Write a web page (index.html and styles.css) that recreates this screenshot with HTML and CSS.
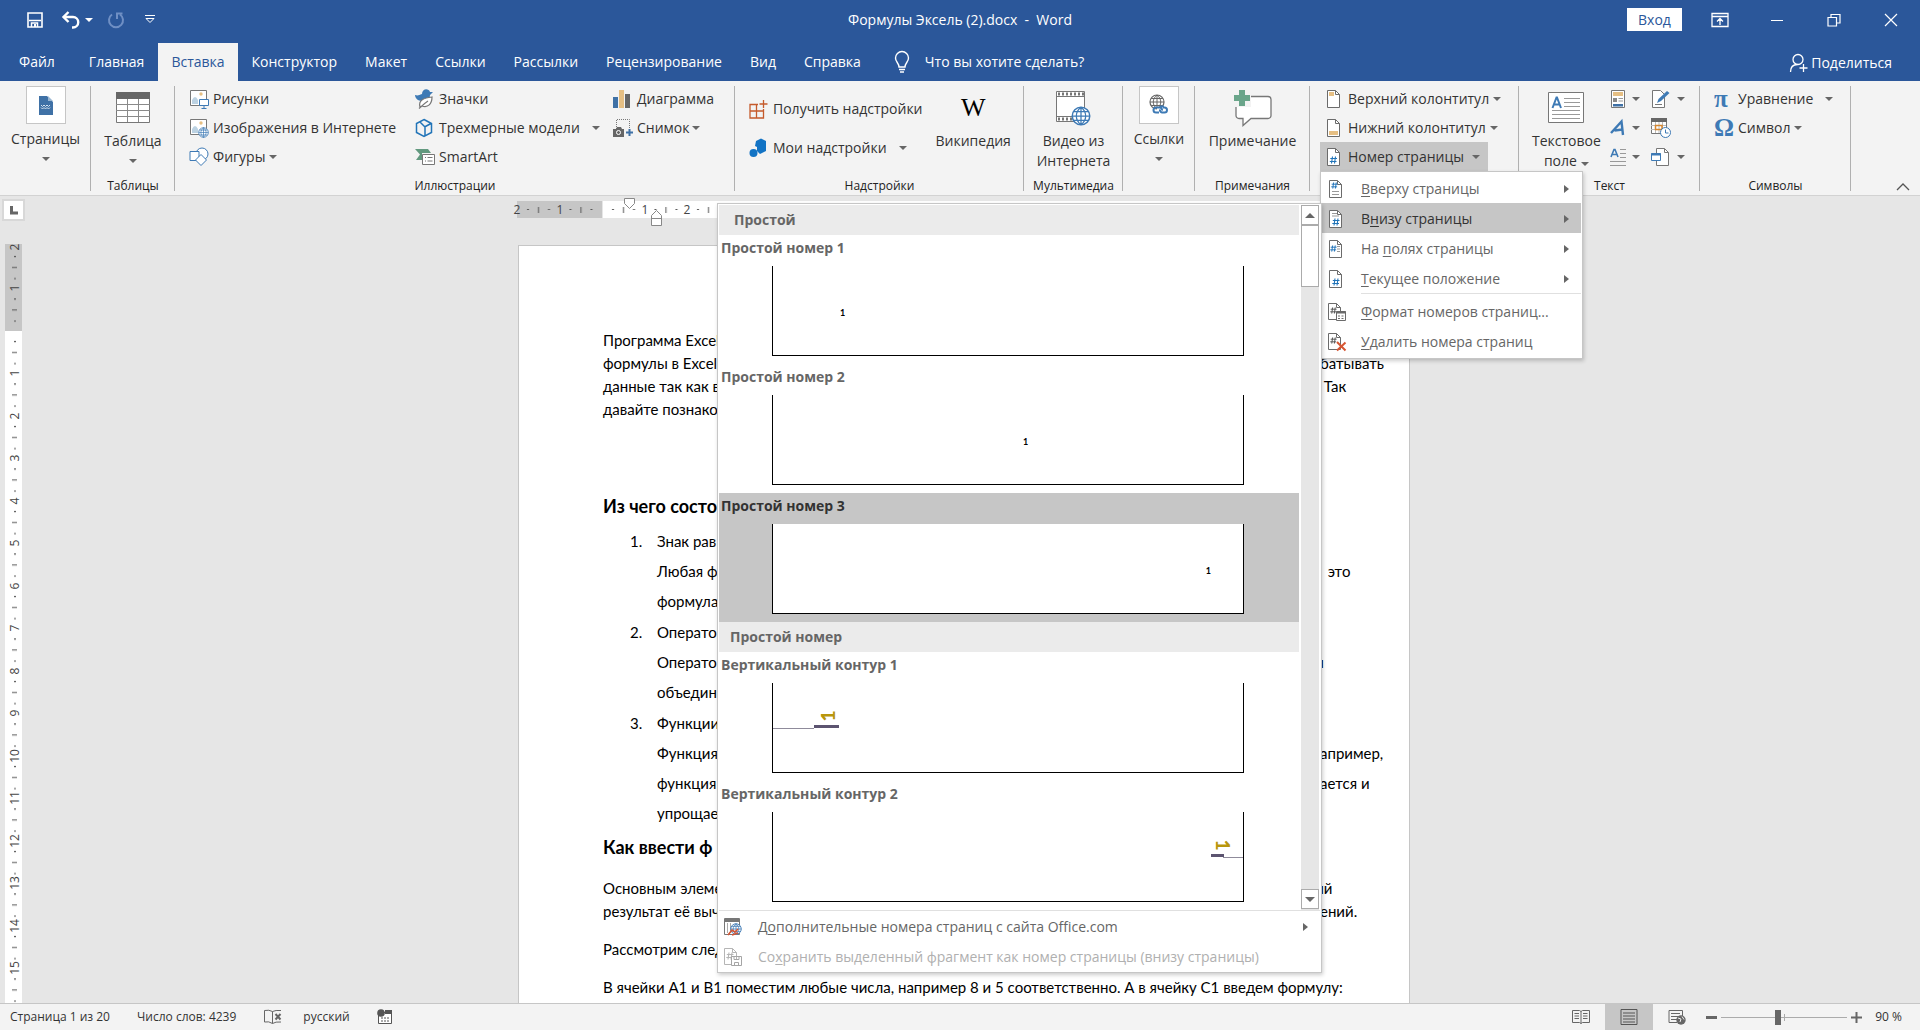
FILE: index.html
```html
<!DOCTYPE html>
<html lang="ru">
<head>
<meta charset="utf-8">
<meta name="viewport" content="width=device-width, initial-scale=1">
<title>Формулы Эксель (2).docx - Word</title>
<link rel="stylesheet" href="styles.css">
</head>
<body>
<svg class="defs" aria-hidden="true">
  <symbol id="doc" viewBox="0 0 20 20"><path d="M3.5 1.5h8l4 4v13h-12z" fill="#fff" stroke="#6b6b6b"/><path d="M11.5 1.5v4h4" fill="none" stroke="#6b6b6b"/></symbol>
  <symbol id="hash" viewBox="0 0 8 8"><path d="M3 .5 2 7.500M6 .5 5 7.500M.8 2.500h6.700M.3 5.500h6.700" fill="none" stroke="currentColor" stroke-width="1.100"/></symbol>
  <symbol id="globe" viewBox="0 0 16 16"><circle cx="8" cy="8" r="7" fill="#fff" stroke="currentColor" stroke-width="1.200"/><path d="M8 1v14M1 8h14M2.200 4.500h11.600M2.200 11.500h11.600M8 1c-5 4-5 10 0 14M8 1c5 4 5 10 0 14" fill="none" stroke="currentColor"/></symbol>
  <symbol id="picture" viewBox="0 0 20 20"><path d="M1.500 1.500h16v15h-16z" fill="#fff" stroke="#777"/><circle cx="12" cy="5" r="1.700" fill="#e6bf83"/><path d="M3 15V11q3-6 6 0v4z" fill="#bcd2e2"/></symbol>
</svg>

<header class="title-bar">
  <div class="quick">
    <button class="quick-btn" aria-label="Сохранить"><svg width="18" height="18" viewBox="0 0 18 18"><path d="M2 2h14v14H2z" fill="none" stroke="#fff" stroke-width="1.600"/><path d="M3 9.500h12M5.500 16v-4h6v4" fill="none" stroke="#fff" stroke-width="1.500"/><path d="M8 13h2v3H8z" fill="#fff"/></svg></button>
    <button class="quick-btn undo" aria-label="Отменить"><svg width="20" height="18" viewBox="0 0 20 18"><path d="M3 6h9a5 5 0 0 1 0 10.500h-1" fill="none" stroke="#fff" stroke-width="2.400"/><path d="M7.500 1 2.500 6l5 5" fill="none" stroke="#fff" stroke-width="2.400"/></svg><i class="caret light"></i></button>
    <button class="quick-btn redo" aria-label="Повторить"><svg width="18" height="18" viewBox="0 0 18 18"><path d="M13 3.500A7 7 0 1 1 5 3.500M10 8V2.500h5.500" fill="none" stroke="#6f8fc4" stroke-width="2"/></svg></button>
    <button class="quick-btn" aria-label="Настройка панели"><svg width="12" height="9" viewBox="0 0 12 9"><path d="M1 .5h10M2 3.500h8L6 7.500z" fill="none" stroke="#fff"/></svg></button>
  </div>
  <h1 class="doc-name">Формулы Эксель (2).docx&nbsp; -&nbsp; Word</h1>
  <div class="window-controls">
    <button class="sign-in">Вход</button>
    <button class="win-btn" aria-label="Параметры ленты"><svg width="18" height="16" viewBox="0 0 18 16"><path d="M1 1.500h16v13H1zM1 4.500h16M9 13V7M6 9.500l3-3 3 3" fill="none" stroke="#fff" stroke-width="1.300"/></svg></button>
    <button class="win-btn" aria-label="Свернуть"><svg width="14" height="14" viewBox="0 0 14 14"><path d="M1 7.500h12" stroke="#fff"/></svg></button>
    <button class="win-btn" aria-label="Свернуть в окно"><svg width="14" height="14" viewBox="0 0 14 14"><path d="M1 4.500h8.500V13H1zM4 4.500v-3h9V10H9.500" fill="none" stroke="#fff" stroke-width="1.200"/></svg></button>
    <button class="win-btn" aria-label="Закрыть"><svg width="14" height="14" viewBox="0 0 14 14"><path d="m1 1 12 12M13 1 1 13" stroke="#fff" stroke-width="1.200"/></svg></button>
  </div>
</header>

<nav class="tabs">
  <button class="tab file">Файл</button>
  <button class="tab">Главная</button>
  <button class="tab active">Вставка</button>
  <button class="tab">Конструктор</button>
  <button class="tab">Макет</button>
  <button class="tab">Ссылки</button>
  <button class="tab">Рассылки</button>
  <button class="tab">Рецензирование</button>
  <button class="tab">Вид</button>
  <button class="tab">Справка</button>
  <button class="tell-me"><svg width="16" height="22" viewBox="0 0 16 22"><path d="M5 16c0-4-3.500-5-3.500-9a6.500 6.500 0 0 1 13 0c0 4-3.500 5-3.500 9zM5 18.500h6M6 21h4" fill="none" stroke="#fff" stroke-width="1.400"/></svg>Что вы хотите сделать?</button>
  <button class="share"><svg width="20" height="20" viewBox="0 0 20 20"><circle cx="9" cy="6.500" r="5" fill="none" stroke="#fff" stroke-width="1.300"/><path d="M1.500 19c0-5 3-7.500 7-7.500M14.500 11v8M10.500 15h8" fill="none" stroke="#fff" stroke-width="1.300"/></svg>Поделиться</button>
</nav>

<div class="ribbon">
  <section class="group g-pages">
    <div class="group-body center">
      <button class="big framed"><span class="frame"><svg width="14" height="20" viewBox="0 0 14 20"><path d="M0 1h8l6 6v13H0z" fill="#3f71a6"/><path d="M9 1v5h5z" fill="#9bb8d3"/><path d="m2 10 1.500 1.500L5 10l1.500 1.500L8 10l1.500 1.500L11 10M2 12.500 3.500 14 5 12.500 6.500 14 8 12.500 9.500 14l1.500-1.500" fill="none" stroke="#d6e3ef"/></svg></span>Страницы<i class="caret"></i></button>
    </div>
  </section>
  <section class="group g-tables">
    <div class="group-body center">
      <button class="big"><span class="pic"><svg width="36" height="33" viewBox="0 0 36 33"><path d="M1.500 1.500h33v30h-33z" fill="#fff" stroke="#777"/><path d="M1 1h34v7H1z" fill="#666"/><path d="M12.500 8v23M23.500 8v23M1 13.500h34M1 19.500h34M1 25.500h34" stroke="#8a8a8a"/></svg></span>Таблица<i class="caret"></i></button>
    </div>
    <h2 class="group-name">Таблицы</h2>
  </section>
  <section class="group g-art">
    <div class="group-body art-cols">
      <div class="stack">
        <button class="cmd"><svg width="20" height="20"><use href="#picture"/><path d="M10.500 10.500h9v6h-9zM15 17v2M12.500 19.500h5" fill="#fff" stroke="#3e7ab5"/></svg>Рисунки</button>
        <button class="cmd"><svg width="20" height="20"><use href="#picture"/><use href="#globe" x="9" y="9" width="11" height="11" color="#3e7ab5"/></svg>Изображения в Интернете</button>
        <button class="cmd"><svg width="20" height="20" fill="#fff" stroke="#3e7ab5"><circle cx="13" cy="7" r="6"/><path d="M1 4.500h9v9H1z"/><path d="m12 7.500 5.500 5.500-5.500 5.500L6.500 13z"/></svg>Фигуры<i class="caret"></i></button>
      </div>
      <div class="stack">
        <button class="cmd"><svg width="20" height="20"><path d="M0 6c3 1 4 0 7-1 0-6 7-6 8-2l3 0-3 3c0 6-5 6-8 6C3 12 0 9 0 6z" fill="#3e7ab5"/><path d="M5 18C3 11 9 9 17 8c0 7-4 11-10 9zM4 19.500C8 16 10 14 13 12" fill="#fff" stroke="#777" stroke-width="1.200"/></svg>Значки</button>
        <button class="cmd"><svg width="20" height="20" fill="none" stroke="#2174b8" stroke-width="1.500"><path d="m9 1.500 7.500 4v9L9 18.500l-7.500-4v-9zM5 4l5 5v9.500M16 5.500 9.500 9"/></svg>Трехмерные модели<i class="caret wide"></i></button>
        <button class="cmd"><svg width="20" height="20"><path d="M0 2h13l3 4H7v7H1l4-5.500z" fill="#62997f"/><path d="M7.500 7.500h12v10h-12z" fill="#fff" stroke="#777"/><path d="M10 10.500h1M12.500 10.500h5M10 14h1M12.500 14h5" stroke="#777"/></svg>SmartArt</button>
      </div>
      <div class="stack">
        <button class="cmd"><svg width="20" height="20"><path d="M0 8h5v11H0z" fill="#3f71a6"/><path d="M6 1h5v18H6z" fill="#e6bf83"/><path d="M12 5h5v14h-5z" fill="#666"/></svg>Диаграмма</button>
        <button class="cmd"><svg width="20" height="20"><path d="M3.500 11V1.500h13V11" fill="none" stroke="#777" stroke-dasharray="1 1"/><path d="M0 11h3l1-2h4l1 2h2v8H0z" fill="#666"/><circle cx="5.500" cy="14.500" r="2" fill="#666" stroke="#fff"/><path d="M16.500 11v7M13 14.500h7" stroke="#3f71a6" stroke-width="2"/></svg>Снимок<i class="caret tight"></i></button>
      </div>
    </div>
    <h2 class="group-name">Иллюстрации</h2>
  </section>
  <section class="group g-addins">
    <div class="group-body addins">
      <div class="stack roomy">
        <button class="cmd"><svg width="20" height="20" fill="none" stroke="#c55a2b" stroke-width="1.300"><path d="M1 5.500h6.500V19H1zM1 12h13.500v7H1M14.500 12v-2M7.500 12H14M7.500 5.500H9M14.500 1v8M10.500 5h8"/></svg>Получить надстройки</button>
        <button class="cmd"><svg width="20" height="20" fill="#1273c4"><path d="m7 3 5-2.500L17 3v10l-6 3-3-3V9L6 8z"/><circle cx="4.500" cy="15" r="4"/></svg>Мои надстройки<i class="caret wide"></i></button>
      </div>
      <button class="big"><span class="pic wiki">W</span>Википедия</button>
    </div>
    <h2 class="group-name">Надстройки</h2>
  </section>
  <section class="group g-media">
    <div class="group-body center">
      <button class="big"><span class="pic"><svg width="36" height="36" viewBox="0 0 36 36"><path d="M1.500 1.500h28v30h-28z" fill="#fff" stroke="#777"/><path d="M1 6.500h29M1 26.500h29" stroke="#777"/><path d="M3 4h26M3 29h26" stroke="#777" stroke-width="3" stroke-dasharray="2 2"/><use href="#globe" x="16" y="16" width="20" height="20" color="#3e7ab5"/></svg></span>Видео из<br>Интернета</button>
    </div>
    <h2 class="group-name">Мультимедиа</h2>
  </section>
  <section class="group g-links">
    <div class="group-body center">
      <button class="big framed"><span class="frame"><svg width="22" height="22" viewBox="0 0 22 22"><use href="#globe" x="1" y="0" width="16" height="16" color="#666"/><path d="M9 13h7v6H9z" fill="#fff"/><path d="M11 18.500H8a2.500 2.500 0 0 1 0-5h4a2.500 2.500 0 0 1 2 3M12 12.500h4M15 13.500h1.500a2.500 2.500 0 0 1 0 5H14a2.500 2.500 0 0 1-2-3" fill="none" stroke="#3e7ab5" stroke-width="2"/></svg></span>Ссылки<i class="caret"></i></button>
    </div>
  </section>
  <section class="group g-notes">
    <div class="group-body center">
      <button class="big"><span class="pic"><svg width="40" height="38" viewBox="0 0 40 38"><path d="M6 7.500h29a3 3 0 0 1 3 3v16a3 3 0 0 1-3 3H18l-8 7v-7H6a3 3 0 0 1-3-3v-16z" fill="#fff" stroke="#777" stroke-width="1.300"/><path d="M0 0h18v18H0z" fill="#f3f3f3"/><path d="M9 1v16M1 9h16" stroke="#6aa58a" stroke-width="6"/></svg></span>Примечание</button>
    </div>
    <h2 class="group-name">Примечания</h2>
  </section>
  <section class="group g-header">
    <div class="group-body">
      <div class="stack headers">
        <button class="cmd"><svg width="20" height="20"><use href="#doc"/><path d="M5 3h5v4H5z" fill="#e6bf83"/></svg>Верхний колонтитул<i class="caret"></i></button>
        <button class="cmd"><svg width="20" height="20"><use href="#doc"/><path d="M5 13h9v4H5z" fill="#e6bf83"/></svg>Нижний колонтитул<i class="caret"></i></button>
        <div class="menu-anchor">
          <button class="cmd open" aria-expanded="true"><svg width="20" height="20"><use href="#doc"/><use href="#hash" x="5" y="9" width="9" height="8" color="#2174b8"/></svg>Номер страницы<i class="caret"></i></button>
          <ul class="menu">
            <li><button class="item"><svg width="20" height="20"><use href="#doc"/><use href="#hash" x="5" y="3" width="7" height="7" color="#2174b8"/><path d="M6 12.500h7M6 15.500h7" stroke="#999"/></svg><span><u>В</u>верху страницы</span><i class="arrow"></i></button></li>
            <li class="has-sub">
              <button class="item current"><svg width="20" height="20"><use href="#doc"/><path d="M6 4.500h5M6 7h7" stroke="#999"/><use href="#hash" x="6" y="9" width="8" height="8" color="#2174b8"/></svg><span>В<u>н</u>изу страницы</span><i class="arrow"></i></button>
              <div class="gallery">
                <div class="gallery-scroll">
                  <div class="gallery-list">
                    <h3 class="gallery-head">Простой</h3>
                    <button class="choice"><span class="choice-name">Простой номер 1</span><span class="preview">1</span></button>
                    <button class="choice"><span class="choice-name">Простой номер 2</span><span class="preview mid">1</span></button>
                    <button class="choice hover"><span class="choice-name">Простой номер 3</span><span class="preview end">1</span></button>
                    <h3 class="gallery-head compact">Простой номер</h3>
                    <button class="choice"><span class="choice-name">Вертикальный контур 1</span><span class="preview art"><svg width="470" height="90" viewBox="0 0 470 90"><path d="M0 45.500h41" stroke="#8f8b9b"/><path d="M41 43.500h25" stroke="#5c5470" stroke-width="3"/><text class="side-number" transform="translate(62 33) rotate(-90)">1</text></svg></span></button>
                    <button class="choice"><span class="choice-name">Вертикальный контур 2</span><span class="preview art"><svg width="470" height="90" viewBox="0 0 470 90"><path d="M450 45.500h20" stroke="#8f8b9b"/><path d="M438 43.500h13" stroke="#5c5470" stroke-width="3"/><text class="side-number" transform="translate(443 33) rotate(90)">1</text></svg></span></button>
                  </div>
                  <div class="scrollbar">
                    <button class="scroll-btn" aria-label="Вверх"><i class="tri up"></i></button>
                    <div class="thumb"></div>
                    <button class="scroll-btn last" aria-label="Вниз"><i class="tri down"></i></button>
                  </div>
                </div>
                <div class="gallery-foot">
                  <button class="item"><svg width="20" height="20"><path d="M1.500 1.500h15v16h-15z" fill="#fff" stroke="#777"/><path d="M1 2h16v3H1z" fill="#777"/><path d="M4.500 6v10M7.500 6v10" stroke="#aaa"/><use href="#globe" x="7" y="6" width="12" height="12" color="#3e7ab5"/><path d="m5 18 4-5 3 2 3-3M9 18l6-2" fill="none" stroke="#d65532" stroke-width="1.600"/></svg><span>Д<u>о</u>полнительные номера страниц с сайта Office.com</span><i class="arrow"></i></button>
                  <button class="item" disabled><svg width="20" height="20" fill="#fff" stroke="#b5b5b5"><path d="M1.500 1.500h8l4 4v12h-12zM9.500 1.500v4h4"/><use href="#hash" x="3" y="5" width="8" height="8" color="#b5b5b5"/><path d="M8.500 9.500h10v9h-10zM11 9.500v3h5v-3M11.500 18.500v-3h4v3" stroke="#a5a5a5"/></svg><span>Со<u>х</u>ранить выделенный фрагмент как номер страницы (внизу страницы)</span></button>
                </div>
              </div>
            </li>
            <li><button class="item"><svg width="20" height="20"><use href="#doc"/><use href="#hash" x="4" y="6" width="7" height="7" color="#2174b8"/><path d="M11 7.500h3M11 10h3M11 12.500h3" stroke="#999"/></svg><span>На <u>п</u>олях страницы</span><i class="arrow"></i></button></li>
            <li><button class="item"><svg width="20" height="20"><use href="#doc"/><use href="#hash" x="6" y="9" width="8" height="8" color="#2174b8"/></svg><span><u>Т</u>екущее положение</span><i class="arrow"></i></button></li>
            <li class="rule"><button class="item"><svg width="20" height="20"><path d="M2.500 1.500h8l4 4v12h-12zM10.500 1.500v4h4" fill="#fff" stroke="#6b6b6b"/><use href="#hash" x="4" y="5" width="7" height="7" color="#555"/><path d="M10.500 9.500h9v9h-9z" fill="#fff" stroke="#6b6b6b"/><path d="M10 10.500h10" stroke="#6b6b6b" stroke-width="2"/><path d="M12 14h2M15.500 14h2M12 16.500h2M15.500 16.500h2" stroke="#6b6b6b"/></svg><span><u>Ф</u>ормат номеров страниц...</span></button></li>
            <li><button class="item"><svg width="20" height="20"><path d="M2.500 1.500h8l4 4v12h-12zM10.500 1.500v4h4" fill="#fff" stroke="#6b6b6b"/><use href="#hash" x="4" y="5" width="7" height="7" color="#555"/><path d="m11 10 8.500 8.500M19.500 10.500 11 18.500" stroke="#d65532" stroke-width="2"/></svg><span><u>У</u>далить номера страниц</span></button></li>
          </ul>
        </div>
      </div>
    </div>
  </section>
  <section class="group g-text">
    <div class="group-body text-tools">
      <button class="big"><span class="pic"><svg width="36" height="33" viewBox="0 0 36 33"><path d="M.5 1.500h35v30H.5z" fill="#fff" stroke="#777"/><path d="M16 7.500h16M16 11.500h16M16 15.500h16M4 19.500h28M4 23.500h28M4 27.500h28" stroke="#999"/><path d="m4.500 17 4-10.500h.5l4 10.500M6 13.500h5.500" fill="none" stroke="#3e7ab5" stroke-width="2"/></svg></span>Текстовое<br><span>поле<i class="caret"></i></span></button>
      <div class="stack icons">
        <button class="cmd" aria-label="Экспресс-блоки"><svg width="16" height="20"><path d="M1.500 1.500h13v17h-13z" fill="#fff" stroke="#777"/><path d="M3 3h10v4H3z" fill="#e6bf83"/><path d="M3 9h4v4H3z" fill="#888"/><path d="M8.500 9.500h4.500M8.500 12h4.500" stroke="#999"/><path d="M3 15h10v2.500H3z" fill="#3f71a6"/></svg><i class="caret"></i></button>
        <button class="cmd" aria-label="Объект WordArt"><svg width="16" height="20" fill="none" stroke="#3e7ab5" stroke-width="2.400"><path d="M1 15 11.500 3.500 13 17M4.500 12.500l8-1"/></svg><i class="caret"></i></button>
        <button class="cmd" aria-label="Буквица"><svg width="16" height="20"><path d="m1 10 3-7.500h1L8 10M2.500 7.500h4" fill="none" stroke="#3e7ab5" stroke-width="1.600"/><path d="M10 2.500h6M10 6.500h6M10 10.500h6M0 14.500h16M0 18.500h16" stroke="#999"/></svg><i class="caret"></i></button>
      </div>
      <div class="stack icons">
        <button class="cmd" aria-label="Строка подписи"><svg width="20" height="20"><path d="M1.500 1.500h8l4 4v13h-12z" fill="#fff" stroke="#777"/><path d="M4 15.500h7" stroke="#777"/><path d="m6 14 1.500-4L16 2l2.500 2L10 12z" fill="#3e7ab5"/></svg><i class="caret"></i></button>
        <button class="cmd" aria-label="Дата и время"><svg width="20" height="20"><path d="M.5 1.500h15v14H.5z" fill="#fff" stroke="#777"/><path d="M0 0h16v4H0z" fill="#666"/><path d="M4.500 4v11M8 4v11M11.500 4v11M0 7.500h15M0 11.500h15" stroke="#bbb"/><path d="M4.500 7.500H11v4H4.500z" fill="none" stroke="#d6862f" stroke-width="1.500"/><circle cx="14.500" cy="14.500" r="5" fill="#fff" stroke="#3e7ab5"/><path d="M14.500 11.500v3.500h3" fill="none" stroke="#3e7ab5"/></svg></button>
        <button class="cmd" aria-label="Объект"><svg width="20" height="20"><path d="M5.500 1.500h8l4 4v13h-12z" fill="#fff" stroke="#777"/><path d="M13.500 1.500v4h4" fill="none" stroke="#777"/><path d="M.5 6.500h9v7h-9z" fill="#fff" stroke="#3e7ab5"/><path d="M0 7.500h10" stroke="#3e7ab5" stroke-width="2"/></svg><i class="caret"></i></button>
      </div>
    </div>
    <h2 class="group-name">Текст</h2>
  </section>
  <section class="group g-symbols">
    <div class="group-body">
      <div class="stack symbols">
        <button class="cmd"><b class="glyph">π</b>Уравнение<i class="caret wide"></i></button>
        <button class="cmd"><b class="glyph">Ω</b>Символ<i class="caret"></i></button>
      </div>
    </div>
    <h2 class="group-name">Символы</h2>
  </section>
  <button class="collapse" aria-label="Свернуть ленту"><svg width="14" height="8" viewBox="0 0 14 8"><path d="m1 7 6-6 6 6" fill="none" stroke="#555" stroke-width="1.300"/></svg></button>
</div>

<main class="workspace">
  <div class="corner"><button class="tab-stop" aria-label="Табуляция"><svg width="8" height="9" viewBox="0 0 8 9"><path d="M1.500 0v7H8" fill="none" stroke="#666" stroke-width="3"/></svg></button></div>
  <div class="ruler-h">
    <svg width="890" height="30" viewBox="0 0 890 30">
      <defs><pattern id="ticks-h" patternUnits="userSpaceOnUse" x="83" y="5" width="42.500" height="17"><path d="M10 8h2v1h-2zM21 6h1v6h-1zM31 8h2v1h-2z" fill="#555"/></pattern></defs>
      <path d="M-2 5h85v17h-85z" fill="#c6c6c6"/><path d="M84 5h784v17H84z" fill="#fff"/><path d="M868 5h22v17h-22z" fill="#c6c6c6"/>
      <path d="M0 5h890v17H0z" fill="url(#ticks-h)"/>
      <g class="ruler-num"><text x="-2" y="18">2</text><text x="41" y="18">1</text><text x="126" y="18">1</text><text x="168" y="18">2</text></g>
      <path d="M105.500 2.500h10v5l-5 5-5-5z" fill="#fff" stroke="#888"/><path d="M132.500 29.500v-10l5-5 5 5v10zM132.500 22.500h10" fill="#fff" stroke="#888"/>
    </svg>
  </div>
  <div class="ruler-v">
    <svg width="17" height="1000" viewBox="0 0 17 1000">
      <defs><pattern id="ticks-v" patternUnits="userSpaceOnUse" x="0" y="87" width="17" height="42.500"><path d="M9 10h2v1h-2zM7 21h5v1h-5zM9 32h2v1h-2z" fill="#555"/></pattern></defs>
      <path d="M0 0h17v87H0z" fill="#c6c6c6"/><path d="M0 87h17v913H0z" fill="#fff"/><path d="M0 0h17v1000H0z" fill="url(#ticks-v)"/>
      <g class="ruler-num">
        <text transform="translate(14 3) rotate(-90)">2</text><text transform="translate(14 44) rotate(-90)">1</text>
        <text transform="translate(14 129) rotate(-90)">1</text><text transform="translate(14 172) rotate(-90)">2</text><text transform="translate(14 214) rotate(-90)">3</text><text transform="translate(14 257) rotate(-90)">4</text><text transform="translate(14 299) rotate(-90)">5</text><text transform="translate(14 342) rotate(-90)">6</text><text transform="translate(14 384) rotate(-90)">7</text><text transform="translate(14 427) rotate(-90)">8</text><text transform="translate(14 469) rotate(-90)">9</text><text transform="translate(14 512) rotate(-90)">10</text><text transform="translate(14 554) rotate(-90)">11</text><text transform="translate(14 597) rotate(-90)">12</text><text transform="translate(14 639) rotate(-90)">13</text><text transform="translate(14 682) rotate(-90)">14</text><text transform="translate(14 724) rotate(-90)">15</text>
      </g>
    </svg>
  </div>
  <article class="page">
    <p class="first"><span class="line"><span>Программа Excel</span></span>
      <span class="line"><span>формулы в Excel</span><span>батывать</span></span>
      <span class="line"><span>данные так как в</span><span>&nbsp;Так</span></span>
      <span class="line"><span>давайте познако</span></span></p>
    <h2 class="chapter">Из чего состо</h2>
    <ol class="steps">
      <li><span class="num">1.</span><div><span class="line"><span>Знак рав</span></span><span class="line"><span>Любая ф</span><span>&nbsp;&nbsp;это</span></span><span class="line"><span>формула</span></span></div></li>
      <li><span class="num">2.</span><div><span class="line"><span>Операто</span></span><span class="line"><span>Операто</span><span class="tuck">ы</span></span><span class="line"><span>объедин</span></span></div></li>
      <li><span class="num">3.</span><div><span class="line"><span>Функции</span></span><span class="line"><span>Функция</span><span>апример,</span></span><span class="line"><span>функция</span><span>ается и</span></span><span class="line"><span>упрощае</span></span></div></li>
    </ol>
    <h2 class="chapter">Как ввести ф</h2>
    <p><span class="line"><span>Основным элеме</span><span class="tuck">ый</span></span>
      <span class="line"><span>результат её выч</span><span>ений.</span></span></p>
    <p>Рассмотрим след</p>
    <p>В ячейки А1 и В1 поместим любые числа, например 8 и 5 соответственно. А в ячейку С1 введем формулу:</p>
  </article>
</main>

<footer class="status">
  <span class="status-text pages">Страница 1 из 20</span>
  <span class="status-text words">Число слов: 4239</span>
  <button class="status-btn" aria-label="Правописание"><svg width="18" height="16" viewBox="0 0 18 16"><path d="M8.500 2.500Q5 .5 .5 1.500v11.500q4.500-1 8 1.500 3-2 8.500-1.500M8.500 2.500v12M8.500 2.500q3-1.500 8.500-1" fill="none" stroke="#666"/><path d="m11.500 5 5 5.500M16.500 5l-5 5.500" stroke="#666" stroke-width="2"/></svg></button>
  <span class="status-text lang">русский</span>
  <button class="status-btn" aria-label="Запись макроса"><svg width="16" height="16" viewBox="0 0 16 16"><path d="M1.500 3.500h13v11h-13z" fill="#fff" stroke="#555"/><path d="M8 1h7v4H8z" fill="#555"/><circle cx="4" cy="4" r="3.800" fill="#555"/><path d="M4 9h8M4 12h8" stroke="#555" stroke-dasharray="2 1"/></svg></button>
  <div class="views">
    <button class="view" aria-label="Режим чтения"><svg width="18" height="16" viewBox="0 0 18 16"><path d="M.5 1.500h7l1.500 1 1.500-1h7v12h-7l-1.500 1-1.500-1h-7zM9 2.500v12M2.500 4.500h4.500M2.500 7h4.500M2.500 9.500h4.500M11 4.500h4.500M11 7h4.500M11 9.500h4.500" fill="none" stroke="#666"/></svg></button>
    <button class="view on" aria-label="Разметка страницы"><svg width="18" height="16" viewBox="0 0 18 16"><path d="M1 .5h16v15H1zM3 4h12M3 7h12M3 10h12M3 13h12" fill="none" stroke="#555"/></svg></button>
    <button class="view" aria-label="Веб-документ"><svg width="18" height="16" viewBox="0 0 18 16"><path d="M14.500 7V1.500H1v12h8M3 4.500h9M3 7.500h8M3 10.500h6" fill="none" stroke="#666"/><circle cx="13" cy="11" r="4.700" fill="#666"/><path d="m10 9 3 1-1 3M14 7.500l2 3" fill="none" stroke="#eee"/></svg></button>
  </div>
  <div class="zoom">
    <button class="zoom-btn" aria-label="Уменьшить"><svg width="11" height="11"><path d="M0 5.500h11" stroke="#666" stroke-width="3"/></svg></button>
    <input class="zoom-range" type="range" min="10" max="190" value="90" aria-label="Масштаб">
    <button class="zoom-btn" aria-label="Увеличить"><svg width="11" height="11"><path d="M0 5.500h11M5.500 0v11" stroke="#666" stroke-width="2"/></svg></button>
    <span class="status-text">90 %</span>
  </div>
</footer>
</body>
</html>
```
FILE: styles.css
```css
* { box-sizing: border-box; }
body {
  margin: 0;
  height: 100vh;
  display: flex;
  flex-direction: column;
  overflow: hidden;
  font: 14px/20px "Open Sans", "Noto Sans", sans-serif;
  color: #333;
  background: #e6e6e6;
}
button {
  font: inherit;
  color: inherit;
  background: none;
  border: 0;
  padding: 0;
  text-align: left;
}
h1, h2, h3, p, ul, ol { margin: 0; padding: 0; }
svg { display: block; flex: none; overflow: visible; }
.defs { position: absolute; width: 0; height: 0; }

.caret {
  display: inline-block;
  flex: none;
  border: 4px solid transparent;
  border-top-color: #666;
  border-bottom: 0;
  margin-left: 4px;
}
.caret.light { border-top-color: #fff; }
.caret.wide { margin-left: 12px; }
.caret.tight { margin-left: 2px; }
.arrow {
  flex: none;
  margin-left: auto;
  border: 4px solid transparent;
  border-left: 5px solid #666;
  border-right: 0;
}

/* Title bar */
.title-bar {
  flex: none;
  height: 39px;
  display: grid;
  grid-template-columns: 1fr auto 1fr;
  align-items: center;
  background: #2b579a;
  color: #fff;
}
.quick { display: flex; align-items: center; padding-left: 26px; gap: 14px; }
.quick-btn { display: flex; align-items: center; }
.undo { margin-left: 3px; }
.redo { margin-right: 5px; }
.doc-name { font-size: 14px; font-weight: 400; }
.window-controls { display: flex; align-items: center; justify-content: flex-end; padding-right: 1px; }
.sign-in {
  width: 55px;
  height: 23px;
  margin-right: 9px;
  background: #fff;
  color: #2b579a;
  text-align: center;
}
.win-btn { width: 57px; height: 38px; display: grid; place-items: center; }

/* Tabs */
.tabs {
  flex: none;
  height: 42px;
  padding: 4px 28px 0 5px;
  display: flex;
  align-items: stretch;
  background: #2b579a;
  color: #fff;
}
.tab { padding: 0 14px; }
.tab.file { margin-right: 6px; }
.tab.active { padding: 0 13px; background: #f3f3f3; color: #2b579a; }
.tell-me { display: flex; align-items: center; gap: 15px; margin-left: 19px; }
.share { display: flex; align-items: center; gap: 2px; margin-left: auto; padding-top: 2px; }

/* Ribbon */
.ribbon {
  position: relative;
  z-index: 2;
  flex: none;
  height: 115px;
  padding-top: 3px;
  display: flex;
  background: #f3f3f3;
  border-bottom: 1px solid #d2d2d2;
}
.group {
  flex: none;
  height: 110px;
  display: flex;
  flex-direction: column;
  background: linear-gradient(#b0b0b0, #b0b0b0) no-repeat right 2px / 1px 105px;
}
.g-pages { width: 91px; }
.g-tables { width: 84px; }
.g-art { width: 560px; }
.g-addins { width: 289px; }
.g-media { width: 99px; }
.g-links { width: 72px; }
.g-notes { width: 115px; }
.g-header { width: 209px; }
.g-text { width: 181px; }
.g-symbols { width: 151px; }
.group-body { flex: 1; display: flex; }
.group-body.center { justify-content: center; }
.group-name {
  flex: none;
  font-size: 12px;
  line-height: 16px;
  font-weight: 400;
  text-align: center;
  color: #222;
}
.big {
  display: flex;
  flex-direction: column;
  align-items: center;
  text-align: center;
}
.big > .caret { margin: 8px 0 0; }
.pic { height: 47px; display: grid; place-items: center; }
.frame {
  width: 40px;
  height: 38px;
  margin: 2px 0 5px;
  display: grid;
  place-items: center;
  background: #fff;
  border: 1px solid #c6c6c6;
}
.wiki { font: 26px/47px "Liberation Serif", serif; color: #000; }
.stack { display: flex; flex-direction: column; }
.cmd { height: 29px; display: flex; align-items: center; gap: 4px; white-space: nowrap; }
.cmd .caret { margin-left: 0; }
.cmd .caret.wide { margin-left: 8px; }
.cmd .caret.tight { margin-left: -2px; }
.art-cols { padding-left: 14px; display: grid; grid-template-columns: 226px 198px auto; }
.addins { padding-left: 14px; gap: 13px; }
.roomy { padding-top: 5px; }
.roomy .cmd { height: 39px; }
.headers { padding-left: 10px; align-items: flex-start; }
.headers .cmd { padding: 0 8px 0 4px; }
.headers .open { height: 30px; background: #c6c6c6; }
.headers .open .caret { margin-left: 4px; }
.text-tools { padding-left: 13px; gap: 9px; }
.icons .cmd { gap: 6px; }
.icons + .icons { margin-left: 2px; }
.symbols { padding-left: 14px; }
.glyph { width: 20px; font: bold 25px/24px "Liberation Serif", serif; color: #3e7ab5; }
.collapse { margin: auto 10px 4px auto; }

/* Drop-down menu */
.menu-anchor { position: relative; }
.menu {
  position: absolute;
  top: 100%;
  left: 0;
  width: 263px;
  margin-top: -1px;
  padding: 1px 1px 2px;
  list-style: none;
  background: #fff;
  border: 1px solid #c6c6c6;
  box-shadow: 1px 2px 4px rgba(0, 0, 0, .2);
}
.item {
  width: 100%;
  height: 30px;
  padding: 1px 12px 0 4px;
  display: flex;
  align-items: center;
  gap: 15px;
  color: #666;
  white-space: nowrap;
}
.item:disabled { color: #b0b0b0; }
.item.current { background: #c6c6c6; color: #333; }
.item u { text-underline-offset: 2px; }
.has-sub { position: relative; }
.rule { padding-top: 3px; background: linear-gradient(#e0e0e0, #e0e0e0) no-repeat 39px 0 / 100% 1px; }

/* Gallery of page numbers */
.gallery {
  position: absolute;
  top: 0;
  right: 100%;
  width: 605px;
  padding: 1px;
  background: #fff;
  border: 1px solid #c6c6c6;
  box-shadow: 1px 2px 4px rgba(0, 0, 0, .2);
}
.gallery-scroll { display: flex; gap: 2px; }
.gallery-list { flex: 1; }
.gallery-head {
  height: 30px;
  padding: 0 15px;
  font-size: 14px;
  line-height: 30px;
  color: #666;
  background: #ebebeb;
}
.gallery-head.compact { padding: 0 11px; }
.choice { display: block; width: 100%; padding: 3px 0 8px; font-weight: 700; color: #666; }
.choice.hover { background: #c6c6c6; color: #333; }
.choice-name { display: block; padding-left: 2px; }
.preview {
  height: 90px;
  margin: 8px 55px 0 53px;
  padding: 5px 32px 0 67px;
  display: flex;
  align-items: center;
  background: #fff;
  border: 1px solid #000;
  border-top: 0;
  font: bold 9px/12px Lato, sans-serif;
  color: #000;
}
.preview.mid { justify-content: center; }
.preview.end { justify-content: flex-end; }
.preview.art { padding: 0; }
.side-number { font: 900 19px Lato, sans-serif; fill: #b8960c; text-anchor: middle; }
.scrollbar { width: 19px; margin-right: 1px; display: flex; flex-direction: column; background: #e6e6e6; }
.scroll-btn {
  height: 20px;
  display: grid;
  place-items: center;
  background: #fff;
  border: 1px solid #ababab;
}
.scroll-btn.last { margin-top: auto; margin-bottom: 1px; }
.thumb { height: 62px; background: #fff; border: 1px solid #ababab; }
.tri { border: 5px solid transparent; }
.tri.up { border-top: 0; border-bottom-color: #666; }
.tri.down { border-bottom: 0; border-top-color: #666; }
.gallery-foot { border-top: 1px solid #e0e0e0; }

/* Document area */
.workspace {
  flex: 1;
  min-height: 0;
  overflow: hidden;
  padding-right: 17px;
  display: grid;
  grid-template: 49px 1fr / 25px 1fr;
}
.corner { padding: 3px 0 0 2px; }
.tab-stop {
  width: 23px;
  height: 22px;
  display: grid;
  place-items: center;
  background: #fff;
  border: 2px solid #d8d8d8;
}
.ruler-h { justify-self: center; width: 890px; }
.ruler-v { padding-left: 5px; margin-top: -1px; overflow: hidden; }
.ruler-num { font-size: 12px; fill: #444; text-anchor: middle; }
.page {
  justify-self: center;
  width: 892px;
  padding: 83px 20px 60px 84px;
  background: #fff;
  border: 1px solid #c6c6c6;
  font: 15px/23px Lato, "Open Sans", sans-serif;
  color: #000;
}
.page p { margin-bottom: 15px; white-space: nowrap; }
.page .first { margin-bottom: 71px; }
.line { display: grid; grid-template-columns: 717px auto; justify-content: start; }
.tuck { margin-left: -7px; }
.chapter { font-size: 18px; line-height: 28px; }
.steps { list-style: none; padding: 6px 0 4px 27px; }
.steps li { display: flex; margin-bottom: 1px; line-height: 30px; }
.steps .num { width: 27px; }
.steps .line { grid-template-columns: 663px auto; }
.chapter + p { margin-top: 16px; }

/* Status bar */
.status {
  position: relative;
  z-index: 1;
  flex: none;
  height: 27px;
  padding: 0 18px 0 10px;
  display: flex;
  align-items: center;
  background: #f3f3f3;
  border-top: 1px solid #c6c6c6;
}
.status-text { font-size: 12px; }
.pages { margin-right: 27px; }
.words { margin-right: 28px; }
.lang { margin: 0 27px 0 21px; }
.views { display: flex; align-self: stretch; margin-left: auto; }
.view { width: 48px; display: grid; place-items: center; }
.view.on { background: #c6c6c6; }
.zoom { display: flex; align-items: center; margin-left: 5px; }
.zoom .status-text { margin-left: 13px; }
.zoom-range {
  appearance: none;
  width: 126px;
  height: 15px;
  margin: 0 4px;
  background:
    linear-gradient(#ababab, #ababab) no-repeat 63px 4px / 1px 7px,
    linear-gradient(#ababab, #ababab) no-repeat 0 7px / 100% 1px;
}
.zoom-range::-webkit-slider-thumb { appearance: none; width: 6px; height: 15px; background: #666; }
.zoom-range::-moz-range-thumb { width: 6px; height: 15px; border: 0; border-radius: 0; background: #666; }
```
